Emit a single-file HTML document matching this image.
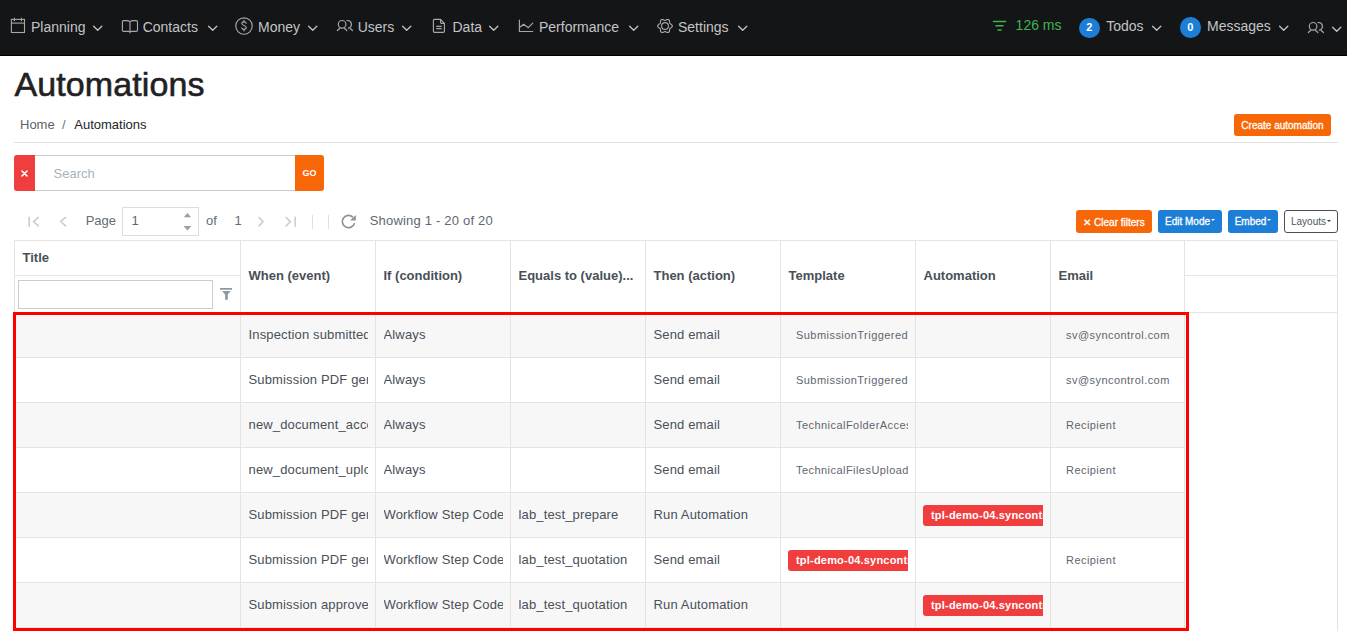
<!DOCTYPE html>
<html><head><meta charset="utf-8"><style>
html,body{margin:0;padding:0;}
body{width:1347px;height:631px;overflow:hidden;position:relative;background:#fff;font-family:"Liberation Sans", sans-serif;}
.t{position:absolute;white-space:nowrap;line-height:1;}
.r{position:absolute;}
.i{position:absolute;display:block;}
.clip{position:absolute;overflow:hidden;}
.btn{position:absolute;color:#fff;text-align:center;border-radius:3px;white-space:nowrap;box-sizing:border-box;}
.car{display:inline-block;width:0;height:0;border-left:2px solid transparent;border-right:2px solid transparent;border-top:2px solid #fff;vertical-align:top;margin-top:9px;margin-left:1px;}
.badge{position:absolute;left:0;top:0;height:20.5px;padding:0 8px;background:#f03e3e;color:#fff;font-weight:bold;font-size:11px;line-height:20.5px;letter-spacing:0.2px;white-space:nowrap;border-radius:3px;}
</style></head><body>
<div class="r" style="left:0px;top:0px;width:1347px;height:55px;background:#141517"></div>
<div class="r" style="left:0px;top:55px;width:1347px;height:1px;background:#000"></div>
<svg class="i" style="left:10px;top:17px;" width="17" height="17" viewBox="0 0 17 17"><g fill="none" stroke="#a6a7ab" stroke-width="1.1"><rect x="1.4" y="2.4" width="13.1" height="13.1"/><path d="M1.4 6.1 H14.5"/><path d="M4.4 0.8 V4.2 M11.4 0.8 V4.2"/></g></svg>
<div class="t" style="left:31px;top:20.15px;font-size:14px;color:#c3c4c7;font-weight:normal;">Planning</div>
<svg class="i" style="left:93px;top:24px;" width="10" height="8" viewBox="0 0 10 8"><path d="M0.6 2.3 L4.7 6.3 L8.8 2.3" fill="none" stroke="#c3c4c7" stroke-width="1.3" stroke-linecap="round" stroke-linejoin="round"/></svg>
<svg class="i" style="left:121px;top:19px;" width="18" height="16" viewBox="0 0 18 16"><g fill="none" stroke="#a6a7ab" stroke-width="1.15" stroke-linejoin="round"><path d="M9 2.6 C8 1.9 7 1.6 5.5 1.6 H2.6 Q1.4 1.6 1.4 2.8 V11.2 Q1.4 12.4 2.6 12.4 H7.5 Q8.5 12.4 9 13"/><path d="M9 2.6 C10 1.9 11 1.6 12.5 1.6 H15.3 Q16.5 1.6 16.5 2.8 V11.2 Q16.5 12.4 15.3 12.4 H10.5 Q9.5 12.4 9 13"/><path d="M9 2.6 V14.3"/></g></svg>
<div class="t" style="left:142.7px;top:20.15px;font-size:14px;color:#c3c4c7;font-weight:normal;">Contacts</div>
<svg class="i" style="left:208px;top:24px;" width="10" height="8" viewBox="0 0 10 8"><path d="M0.6 2.3 L4.7 6.3 L8.8 2.3" fill="none" stroke="#c3c4c7" stroke-width="1.3" stroke-linecap="round" stroke-linejoin="round"/></svg>
<svg class="i" style="left:235px;top:17px;" width="18" height="18" viewBox="0 0 18 18"><g fill="none" stroke="#a6a7ab" stroke-width="1.15" stroke-linecap="round"><circle cx="9" cy="9" r="8.2"/><path d="M11.3 6.3 C11 5.3 10.1 4.8 9 4.8 C7.6 4.8 6.8 5.6 6.8 6.6 C6.8 8.9 11.3 8 11.3 10.6 C11.3 11.7 10.3 12.4 9 12.4 C7.8 12.4 6.9 11.8 6.7 10.8"/><path d="M9 3.3 V4.8 M9 12.4 V14"/></g></svg>
<div class="t" style="left:258px;top:20.15px;font-size:14px;color:#c3c4c7;font-weight:normal;">Money</div>
<svg class="i" style="left:308px;top:24px;" width="10" height="8" viewBox="0 0 10 8"><path d="M0.6 2.3 L4.7 6.3 L8.8 2.3" fill="none" stroke="#c3c4c7" stroke-width="1.3" stroke-linecap="round" stroke-linejoin="round"/></svg>
<svg class="i" style="left:333px;top:16px;" width="24" height="20" viewBox="0 0 24 20"><g fill="none" stroke="#a6a7ab" stroke-width="1.2" stroke-linecap="round"><circle cx="9.1" cy="8.3" r="3.8"/><path d="M4.3 14.6 C5 13.6 5.8 13 6.6 12.6 M11.6 12.6 C12.4 13 13.2 13.6 13.9 14.6"/><path d="M14.04 4.56 A3.8 3.8 0 0 1 15.36 12.04"/><path d="M17.2 12.6 C18 13 18.8 13.6 19.5 14.6"/></g></svg>
<div class="t" style="left:357.7px;top:20.15px;font-size:14px;color:#c3c4c7;font-weight:normal;">Users</div>
<svg class="i" style="left:401.8px;top:24px;" width="10" height="8" viewBox="0 0 10 8"><path d="M0.6 2.3 L4.7 6.3 L8.8 2.3" fill="none" stroke="#c3c4c7" stroke-width="1.3" stroke-linecap="round" stroke-linejoin="round"/></svg>
<svg class="i" style="left:428px;top:14px;" width="24" height="24" viewBox="0 0 24 24"><g fill="none" stroke="#a6a7ab" stroke-width="1.15" stroke-linejoin="round"><path d="M6.4 5.4 H12.5 L16.4 9.3 V17.3 Q16.4 18.3 15.4 18.3 H6.4 Q5.4 18.3 5.4 17.3 V6.4 Q5.4 5.4 6.4 5.4 Z"/><path d="M12.5 5.4 V8.3 Q12.5 9.3 13.5 9.3 H16.4"/><path d="M8.2 12.4 H13.7 M8.2 14.6 H13.7"/></g></svg>
<div class="t" style="left:452.5px;top:20.15px;font-size:14px;color:#c3c4c7;font-weight:normal;">Data</div>
<svg class="i" style="left:489px;top:24px;" width="10" height="8" viewBox="0 0 10 8"><path d="M0.6 2.3 L4.7 6.3 L8.8 2.3" fill="none" stroke="#c3c4c7" stroke-width="1.3" stroke-linecap="round" stroke-linejoin="round"/></svg>
<svg class="i" style="left:512px;top:14px;" width="28" height="24" viewBox="0 0 28 24"><g fill="none" stroke="#a6a7ab" stroke-width="1.15" stroke-linejoin="round" stroke-linecap="round"><path d="M7.4 6.1 V17.5 H20.7"/><path d="M7.8 13.3 L11.6 10.3 L16.3 13.7 L20.7 9.1"/></g></svg>
<div class="t" style="left:539px;top:20.15px;font-size:14px;color:#c3c4c7;font-weight:normal;">Performance</div>
<svg class="i" style="left:628.8px;top:24px;" width="10" height="8" viewBox="0 0 10 8"><path d="M0.6 2.3 L4.7 6.3 L8.8 2.3" fill="none" stroke="#c3c4c7" stroke-width="1.3" stroke-linecap="round" stroke-linejoin="round"/></svg>
<svg class="i" style="left:657px;top:18.1px;" width="16" height="16" viewBox="0 0 16 16"><g fill="none" stroke="#a6a7ab" stroke-width="1.15" stroke-linejoin="round"><path d="M15.30 8.00 L15.22 8.47 L14.98 8.92 L14.61 9.32 L14.18 9.66 L13.73 9.95 L13.32 10.21 L12.99 10.46 L12.76 10.75 L12.63 11.09 L12.57 11.51 L12.55 11.99 L12.53 12.53 L12.45 13.07 L12.28 13.58 L12.02 14.01 L11.65 14.32 L11.20 14.49 L10.69 14.50 L10.17 14.39 L9.66 14.18 L9.18 13.94 L8.75 13.71 L8.36 13.56 L8.00 13.50 L7.64 13.56 L7.25 13.71 L6.82 13.94 L6.34 14.18 L5.83 14.39 L5.31 14.50 L4.80 14.49 L4.35 14.32 L3.98 14.01 L3.72 13.58 L3.55 13.07 L3.47 12.53 L3.45 11.99 L3.43 11.51 L3.37 11.09 L3.24 10.75 L3.01 10.46 L2.68 10.21 L2.27 9.95 L1.82 9.66 L1.39 9.32 L1.02 8.92 L0.78 8.47 L0.70 8.00 L0.78 7.53 L1.02 7.08 L1.39 6.68 L1.82 6.34 L2.27 6.05 L2.68 5.79 L3.01 5.54 L3.24 5.25 L3.37 4.91 L3.43 4.49 L3.45 4.01 L3.47 3.47 L3.55 2.93 L3.72 2.42 L3.98 1.99 L4.35 1.68 L4.80 1.51 L5.31 1.50 L5.83 1.61 L6.34 1.82 L6.82 2.06 L7.25 2.29 L7.64 2.44 L8.00 2.50 L8.36 2.44 L8.75 2.29 L9.18 2.06 L9.66 1.82 L10.17 1.61 L10.69 1.50 L11.20 1.51 L11.65 1.68 L12.02 1.99 L12.28 2.42 L12.45 2.93 L12.53 3.47 L12.55 4.01 L12.57 4.49 L12.63 4.91 L12.76 5.25 L12.99 5.54 L13.32 5.79 L13.73 6.05 L14.18 6.34 L14.61 6.68 L14.98 7.08 L15.22 7.53 L15.30 8.00 Z"/><circle cx="8" cy="8" r="3.4"/></g></svg>
<div class="t" style="left:678px;top:20.15px;font-size:14px;color:#c3c4c7;font-weight:normal;">Settings</div>
<svg class="i" style="left:738.3px;top:24px;" width="10" height="8" viewBox="0 0 10 8"><path d="M0.6 2.3 L4.7 6.3 L8.8 2.3" fill="none" stroke="#c3c4c7" stroke-width="1.3" stroke-linecap="round" stroke-linejoin="round"/></svg>
<svg class="i" style="left:992px;top:20px;" width="15" height="12" viewBox="0 0 15 12"><g fill="none" stroke="#3cb550" stroke-width="1.6" stroke-linecap="round"><path d="M1.5 1.5 H13.5 M4 5.8 H11 M6 10 H9"/></g></svg>
<div class="t" style="left:1015.6px;top:17.95px;font-size:14px;color:#3cb550;font-weight:normal;">126 ms</div>
<div class="r" style="left:1079px;top:17.5px;width:20.5px;height:20.5px;background:#1c7ed6;border-radius:50%"></div>
<div class="t" style="left:1089.3px;top:21.99px;font-size:11px;color:#fff;font-weight:bold;transform:translateX(-50%)">2</div>
<div class="t" style="left:1106.2px;top:19.15px;font-size:14px;color:#c3c4c7;font-weight:normal;">Todos</div>
<svg class="i" style="left:1152px;top:24px;" width="10" height="8" viewBox="0 0 10 8"><path d="M0.6 2.3 L4.7 6.3 L8.8 2.3" fill="none" stroke="#c3c4c7" stroke-width="1.3" stroke-linecap="round" stroke-linejoin="round"/></svg>
<div class="r" style="left:1180px;top:17.2px;width:20.5px;height:20.5px;background:#1c7ed6;border-radius:50%"></div>
<div class="t" style="left:1190.2px;top:21.69px;font-size:11px;color:#fff;font-weight:bold;transform:translateX(-50%)">0</div>
<div class="t" style="left:1207px;top:19.15px;font-size:14px;color:#c3c4c7;font-weight:normal;">Messages</div>
<svg class="i" style="left:1279px;top:24px;" width="10" height="8" viewBox="0 0 10 8"><path d="M0.6 2.3 L4.7 6.3 L8.8 2.3" fill="none" stroke="#c3c4c7" stroke-width="1.3" stroke-linecap="round" stroke-linejoin="round"/></svg>
<svg class="i" style="left:1304.2px;top:18px;" width="24" height="20" viewBox="0 0 24 20"><g fill="none" stroke="#a6a7ab" stroke-width="1.2" stroke-linecap="round"><circle cx="9.1" cy="8.3" r="3.8"/><path d="M4.3 14.6 C5 13.6 5.8 13 6.6 12.6 M11.6 12.6 C12.4 13 13.2 13.6 13.9 14.6"/><path d="M14.04 4.56 A3.8 3.8 0 0 1 15.36 12.04"/><path d="M17.2 12.6 C18 13 18.8 13.6 19.5 14.6"/></g></svg>
<svg class="i" style="left:1332px;top:25px;" width="10" height="8" viewBox="0 0 10 8"><path d="M0.6 2.3 L4.7 6.3 L8.8 2.3" fill="none" stroke="#c3c4c7" stroke-width="1.3" stroke-linecap="round" stroke-linejoin="round"/></svg>
<div class="t" style="left:14.5px;top:67.32px;font-size:34px;color:#1f2124;font-weight:normal;letter-spacing:0.1px;-webkit-text-stroke:0.6px #1f2124">Automations</div>
<div class="t" style="left:20px;top:118.00px;font-size:13px;color:#5c636a;font-weight:normal;">Home</div>
<div class="t" style="left:62px;top:118.00px;font-size:13px;color:#6c757d;font-weight:normal;">/</div>
<div class="t" style="left:74.3px;top:118.00px;font-size:13px;color:#212529;font-weight:normal;">Automations</div>
<div class="r" style="left:14px;top:142px;width:1324px;height:1px;background:#e2e2e2"></div>
<div class="btn" style="left:1234px;top:114px;width:97px;height:22px;background:#f76707;font-size:10px;font-weight:normal;-webkit-text-stroke:0.3px #fff;line-height:22px;padding-top:1px">Create automation</div>
<div class="r" style="left:14px;top:155px;width:21px;height:36px;background:#f03e3e;border-radius:3px 0 0 3px"></div>
<svg class="i" style="left:20.5px;top:169.5px;" width="7" height="7" viewBox="0 0 7 7"><path d="M1 1 L6 6 M6 1 L1 6" stroke="#fff" stroke-width="1.6" stroke-linecap="round"/></svg>
<div class="r" style="left:35px;top:155px;width:260px;height:36px;box-sizing:border-box;border:1px solid #cccccc;border-left:0;border-right:0;background:#fff"></div>
<div class="t" style="left:53.5px;top:167.00px;font-size:13px;color:#a9b3bd;font-weight:normal;">Search</div>
<div class="btn" style="left:295px;top:155px;width:29px;height:36px;background:#f76707;border-radius:0 3px 3px 0;font-size:9px;font-weight:bold;line-height:36px">GO</div>
<svg class="i" style="left:20px;top:210px;" width="290" height="22" viewBox="0 0 290 22"><g fill="none" stroke="#c8cdd2" stroke-width="1.55" stroke-linecap="round" stroke-linejoin="miter"><path d="M9.2 7.2 V16.2"/><path d="M18.3 7.4 L13.5 11.6 L18.3 15.9"/><path d="M45.6 7.4 L40.7 11.6 L45.6 15.9"/><path d="M239.1 7.6 L243.1 11.6 L239.1 15.9"/><path d="M266.2 7.6 L270.4 11.6 L266.2 15.9"/><path d="M275.2 7.3 V16.3"/></g></svg>
<div class="t" style="left:85.7px;top:214.30px;font-size:13px;color:#646d76;font-weight:normal;">Page</div>
<div class="r" style="left:122px;top:207px;width:77px;height:29px;box-sizing:border-box;border:1px solid #dddddd;background:#fff"></div>
<div class="t" style="left:131.5px;top:214.30px;font-size:13px;color:#5f6870;font-weight:normal;">1</div>
<svg class="i" style="left:182px;top:211px;" width="12" height="22" viewBox="0 0 12 22"><path d="M1.8 6.2 L5.45 2 L9.1 6.2 Z M1.5 15 L5.45 19.4 L9.4 15 Z" fill="#98a1aa"/></svg>
<div class="t" style="left:206px;top:214.30px;font-size:13px;color:#646d76;font-weight:normal;">of</div>
<div class="t" style="left:234.5px;top:214.30px;font-size:13px;color:#646d76;font-weight:normal;">1</div>
<div class="r" style="left:312px;top:214.5px;width:1px;height:14.5px;background:#dee2e6"></div>
<div class="r" style="left:327.5px;top:214.5px;width:1px;height:14.5px;background:#dee2e6"></div>
<svg class="i" style="left:340px;top:212px;" width="18" height="18" viewBox="0 0 18 18"><path d="M14.5 11.1 A6.2 6.2 0 1 1 12.9 5.1" fill="none" stroke="#8a939c" stroke-width="1.7"/><path d="M15.8 2.9 L15.8 8.6 L10.1 8.6 Z" fill="#8a939c"/></svg>
<div class="t" style="left:369.7px;top:214.30px;font-size:13px;color:#5f6870;font-weight:normal;letter-spacing:0.2px">Showing 1 - 20 of 20</div>
<div class="btn" style="left:1076px;top:210px;width:76px;height:23px;background:#f76707;font-size:10px;font-weight:normal;-webkit-text-stroke:0.3px #fff;line-height:23px;padding-top:1px">&#x2715; Clear filters</div>
<div class="btn" style="left:1158px;top:210px;width:64px;height:23px;background:#1c7ed6;font-size:10px;font-weight:normal;-webkit-text-stroke:0.3px #fff;line-height:23px;padding-top:0.3px">Edit Mode<span class="car"></span></div>
<div class="btn" style="left:1228px;top:210px;width:50px;height:23px;background:#1c7ed6;font-size:10px;font-weight:normal;-webkit-text-stroke:0.3px #fff;line-height:23px;padding-top:0.3px">Embed<span class="car"></span></div>
<div class="btn" style="left:1284px;top:210px;width:54px;height:23px;box-sizing:border-box;border:1px solid #495057;color:#343a40;background:#fff;font-size:10px;line-height:21px;padding-top:0.3px;color:#4d5661">Layouts<span class="car" style="border-top-color:#343a40"></span></div>
<div class="r" style="left:14px;top:312px;width:1171px;height:45px;background:#f7f7f7"></div>
<div class="r" style="left:14px;top:402px;width:1171px;height:45px;background:#f7f7f7"></div>
<div class="r" style="left:14px;top:492px;width:1171px;height:45px;background:#f7f7f7"></div>
<div class="r" style="left:14px;top:582px;width:1171px;height:45px;background:#f7f7f7"></div>
<div class="r" style="left:14px;top:240px;width:1324px;height:1px;background:#e4e4e4"></div>
<div class="r" style="left:14px;top:240px;width:1px;height:391px;background:#e4e4e4"></div>
<div class="r" style="left:1337px;top:240px;width:1px;height:391px;background:#e4e4e4"></div>
<div class="r" style="left:14px;top:275px;width:226px;height:1px;background:#e4e4e4"></div>
<div class="r" style="left:1185px;top:275px;width:152px;height:1px;background:#e4e4e4"></div>
<div class="r" style="left:14px;top:312px;width:1324px;height:1px;background:#e4e4e4"></div>
<div class="r" style="left:14px;top:357px;width:1171px;height:1px;background:#e4e4e4"></div>
<div class="r" style="left:14px;top:402px;width:1171px;height:1px;background:#e4e4e4"></div>
<div class="r" style="left:14px;top:447px;width:1171px;height:1px;background:#e4e4e4"></div>
<div class="r" style="left:14px;top:492px;width:1171px;height:1px;background:#e4e4e4"></div>
<div class="r" style="left:14px;top:537px;width:1171px;height:1px;background:#e4e4e4"></div>
<div class="r" style="left:14px;top:582px;width:1171px;height:1px;background:#e4e4e4"></div>
<div class="r" style="left:14px;top:627px;width:1171px;height:1px;background:#e4e4e4"></div>
<div class="r" style="left:240px;top:240px;width:1px;height:391px;background:#e4e4e4"></div>
<div class="r" style="left:375px;top:240px;width:1px;height:391px;background:#e4e4e4"></div>
<div class="r" style="left:510px;top:240px;width:1px;height:391px;background:#e4e4e4"></div>
<div class="r" style="left:645px;top:240px;width:1px;height:391px;background:#e4e4e4"></div>
<div class="r" style="left:780px;top:240px;width:1px;height:391px;background:#e4e4e4"></div>
<div class="r" style="left:915px;top:240px;width:1px;height:391px;background:#e4e4e4"></div>
<div class="r" style="left:1050px;top:240px;width:1px;height:391px;background:#e4e4e4"></div>
<div class="r" style="left:1184px;top:240px;width:1px;height:391px;background:#e4e4e4"></div>
<div class="t" style="left:22.5px;top:251.00px;font-size:13px;color:#495057;font-weight:bold;">Title</div>
<div class="r" style="left:18px;top:280px;width:195px;height:29px;box-sizing:border-box;border:1px solid #cccccc;background:#fff"></div>
<svg class="i" style="left:212px;top:280px;" width="28" height="28" viewBox="0 0 28 28"><path d="M8 8 H20 V9.8 H8 Z M10 10.9 H18.7 L15.8 14.6 V19.8 H13.1 V14.6 Z" fill="#8f99a3"/></svg>
<div class="t" style="left:248.5px;top:269.00px;font-size:13px;color:#495057;font-weight:bold;">When (event)</div>
<div class="t" style="left:383.5px;top:269.00px;font-size:13px;color:#495057;font-weight:bold;">If (condition)</div>
<div class="t" style="left:518.5px;top:269.00px;font-size:13px;color:#495057;font-weight:bold;">Equals to (value)...</div>
<div class="t" style="left:653.5px;top:269.00px;font-size:13px;color:#495057;font-weight:bold;">Then (action)</div>
<div class="t" style="left:788.5px;top:269.00px;font-size:13px;color:#495057;font-weight:bold;">Template</div>
<div class="t" style="left:923.5px;top:269.00px;font-size:13px;color:#495057;font-weight:bold;">Automation</div>
<div class="t" style="left:1058.5px;top:269.00px;font-size:13px;color:#495057;font-weight:bold;">Email</div>
<div class="clip" style="left:248.5px;top:312px;width:119.5px;height:45px"><div class="t" style="left:0;top:16.20px;font-size:13px;color:#495057;letter-spacing:0.15px">Inspection submitted</div></div>
<div class="clip" style="left:383.5px;top:312px;width:119.5px;height:45px"><div class="t" style="left:0;top:16.20px;font-size:13px;color:#495057;letter-spacing:0.15px">Always</div></div>
<div class="clip" style="left:653.5px;top:312px;width:119.5px;height:45px"><div class="t" style="left:0;top:16.20px;font-size:13px;color:#495057;letter-spacing:0.15px">Send email</div></div>
<div class="clip" style="left:796px;top:312px;width:112px;height:45px"><div class="t" style="left:0;top:17.79px;font-size:11px;color:#5d666f;letter-spacing:0.45px">SubmissionTriggered</div></div>
<div class="clip" style="left:1066px;top:312px;width:112px;height:45px"><div class="t" style="left:0;top:17.79px;font-size:11px;color:#5d666f;letter-spacing:0.45px">sv@syncontrol.com</div></div>
<div class="clip" style="left:248.5px;top:357px;width:119.5px;height:45px"><div class="t" style="left:0;top:16.20px;font-size:13px;color:#495057;letter-spacing:0.15px">Submission PDF generated</div></div>
<div class="clip" style="left:383.5px;top:357px;width:119.5px;height:45px"><div class="t" style="left:0;top:16.20px;font-size:13px;color:#495057;letter-spacing:0.15px">Always</div></div>
<div class="clip" style="left:653.5px;top:357px;width:119.5px;height:45px"><div class="t" style="left:0;top:16.20px;font-size:13px;color:#495057;letter-spacing:0.15px">Send email</div></div>
<div class="clip" style="left:796px;top:357px;width:112px;height:45px"><div class="t" style="left:0;top:17.79px;font-size:11px;color:#5d666f;letter-spacing:0.45px">SubmissionTriggered</div></div>
<div class="clip" style="left:1066px;top:357px;width:112px;height:45px"><div class="t" style="left:0;top:17.79px;font-size:11px;color:#5d666f;letter-spacing:0.45px">sv@syncontrol.com</div></div>
<div class="clip" style="left:248.5px;top:402px;width:119.5px;height:45px"><div class="t" style="left:0;top:16.20px;font-size:13px;color:#495057;letter-spacing:0.15px">new_document_access</div></div>
<div class="clip" style="left:383.5px;top:402px;width:119.5px;height:45px"><div class="t" style="left:0;top:16.20px;font-size:13px;color:#495057;letter-spacing:0.15px">Always</div></div>
<div class="clip" style="left:653.5px;top:402px;width:119.5px;height:45px"><div class="t" style="left:0;top:16.20px;font-size:13px;color:#495057;letter-spacing:0.15px">Send email</div></div>
<div class="clip" style="left:796px;top:402px;width:112px;height:45px"><div class="t" style="left:0;top:17.79px;font-size:11px;color:#5d666f;letter-spacing:0.45px">TechnicalFolderAccess</div></div>
<div class="clip" style="left:1066px;top:402px;width:112px;height:45px"><div class="t" style="left:0;top:17.79px;font-size:11px;color:#5d666f;letter-spacing:0.45px">Recipient</div></div>
<div class="clip" style="left:248.5px;top:447px;width:119.5px;height:45px"><div class="t" style="left:0;top:16.20px;font-size:13px;color:#495057;letter-spacing:0.15px">new_document_upload</div></div>
<div class="clip" style="left:383.5px;top:447px;width:119.5px;height:45px"><div class="t" style="left:0;top:16.20px;font-size:13px;color:#495057;letter-spacing:0.15px">Always</div></div>
<div class="clip" style="left:653.5px;top:447px;width:119.5px;height:45px"><div class="t" style="left:0;top:16.20px;font-size:13px;color:#495057;letter-spacing:0.15px">Send email</div></div>
<div class="clip" style="left:796px;top:447px;width:112px;height:45px"><div class="t" style="left:0;top:17.79px;font-size:11px;color:#5d666f;letter-spacing:0.45px">TechnicalFilesUploaded</div></div>
<div class="clip" style="left:1066px;top:447px;width:112px;height:45px"><div class="t" style="left:0;top:17.79px;font-size:11px;color:#5d666f;letter-spacing:0.45px">Recipient</div></div>
<div class="clip" style="left:248.5px;top:492px;width:119.5px;height:45px"><div class="t" style="left:0;top:16.20px;font-size:13px;color:#495057;letter-spacing:0.15px">Submission PDF generated</div></div>
<div class="clip" style="left:383.5px;top:492px;width:119.5px;height:45px"><div class="t" style="left:0;top:16.20px;font-size:13px;color:#495057;letter-spacing:0.15px">Workflow Step Code</div></div>
<div class="clip" style="left:518.5px;top:492px;width:119.5px;height:45px"><div class="t" style="left:0;top:16.20px;font-size:13px;color:#495057;letter-spacing:0.15px">lab_test_prepare</div></div>
<div class="clip" style="left:653.5px;top:492px;width:119.5px;height:45px"><div class="t" style="left:0;top:16.20px;font-size:13px;color:#495057;letter-spacing:0.15px">Run Automation</div></div>
<div class="clip" style="left:923px;top:505px;width:120px;height:21px"><div class="badge">tpl-demo-04.syncontrol.com</div></div>
<div class="clip" style="left:248.5px;top:537px;width:119.5px;height:45px"><div class="t" style="left:0;top:16.20px;font-size:13px;color:#495057;letter-spacing:0.15px">Submission PDF generated</div></div>
<div class="clip" style="left:383.5px;top:537px;width:119.5px;height:45px"><div class="t" style="left:0;top:16.20px;font-size:13px;color:#495057;letter-spacing:0.15px">Workflow Step Code</div></div>
<div class="clip" style="left:518.5px;top:537px;width:119.5px;height:45px"><div class="t" style="left:0;top:16.20px;font-size:13px;color:#495057;letter-spacing:0.15px">lab_test_quotation</div></div>
<div class="clip" style="left:653.5px;top:537px;width:119.5px;height:45px"><div class="t" style="left:0;top:16.20px;font-size:13px;color:#495057;letter-spacing:0.15px">Send email</div></div>
<div class="clip" style="left:788px;top:550px;width:120px;height:21px"><div class="badge">tpl-demo-04.syncontrol.com</div></div>
<div class="clip" style="left:1066px;top:537px;width:112px;height:45px"><div class="t" style="left:0;top:17.79px;font-size:11px;color:#5d666f;letter-spacing:0.45px">Recipient</div></div>
<div class="clip" style="left:248.5px;top:582px;width:119.5px;height:45px"><div class="t" style="left:0;top:16.20px;font-size:13px;color:#495057;letter-spacing:0.15px">Submission approved</div></div>
<div class="clip" style="left:383.5px;top:582px;width:119.5px;height:45px"><div class="t" style="left:0;top:16.20px;font-size:13px;color:#495057;letter-spacing:0.15px">Workflow Step Code</div></div>
<div class="clip" style="left:518.5px;top:582px;width:119.5px;height:45px"><div class="t" style="left:0;top:16.20px;font-size:13px;color:#495057;letter-spacing:0.15px">lab_test_quotation</div></div>
<div class="clip" style="left:653.5px;top:582px;width:119.5px;height:45px"><div class="t" style="left:0;top:16.20px;font-size:13px;color:#495057;letter-spacing:0.15px">Run Automation</div></div>
<div class="clip" style="left:923px;top:595px;width:120px;height:21px"><div class="badge">tpl-demo-04.syncontrol.com</div></div>
<div class="r" style="left:13px;top:312px;width:1176px;height:319px;box-sizing:border-box;border:3px solid #ff0000"></div>
</body></html>
